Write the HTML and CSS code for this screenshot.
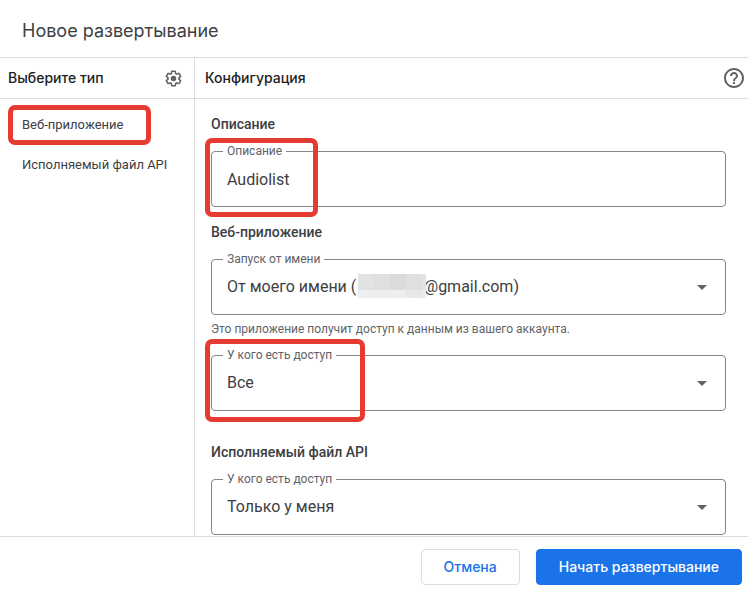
FILE: index.html
```html
<!DOCTYPE html>
<html lang="ru">
<head>
<meta charset="utf-8">
<meta name="viewport" content="width=device-width, initial-scale=1">
<title>Новое развертывание</title>
<link rel="stylesheet" href="styles.css">
</head>
<body>
<main class="dialog">
  <header class="dialog-header"><h1>Новое развертывание</h1></header>
  <div class="columns">
    <nav class="sidebar" aria-labelledby="type-title">
      <div class="bar">
        <h2 id="type-title">Выберите тип</h2>
        <button class="icon-button" type="button" aria-label="Настройки">
          <svg class="gear" viewBox="0 0 24 24"><path d="M13.85 22.25h-3.7c-.74 0-1.36-.54-1.45-1.27l-.27-1.89c-.27-.14-.53-.29-.79-.46l-1.8.72c-.7.26-1.47-.03-1.81-.65L2.2 15.53c-.35-.66-.2-1.44.36-1.88l1.53-1.19c-.01-.15-.02-.3-.02-.46 0-.15.01-.31.02-.46l-1.52-1.19c-.59-.45-.74-1.26-.37-1.88l1.85-3.19c.34-.62 1.11-.9 1.79-.63l1.81.73c.26-.17.52-.32.78-.46l.27-1.91c.09-.7.71-1.25 1.44-1.25h3.7c.74 0 1.36.54 1.45 1.27l.27 1.89c.27.14.53.29.79.46l1.8-.72c.71-.26 1.48.03 1.82.65l1.84 3.18c.36.66.2 1.44-.36 1.88l-1.52 1.19c.01.15.02.3.02.46s-.01.31-.02.46l1.52 1.19c.56.45.72 1.23.37 1.86l-1.86 3.22c-.34.62-1.11.9-1.8.63l-1.8-.72c-.26.17-.52.32-.78.46l-.27 1.91c-.1.68-.72 1.22-1.46 1.22zm-3.23-2h2.76l.37-2.55.53-.22c.44-.18.88-.44 1.34-.78l.45-.34 2.38.96 1.38-2.4-2.03-1.58.07-.56c.03-.26.06-.51.06-.78s-.03-.53-.06-.78l-.07-.56 2.03-1.58-1.39-2.4-2.39.96-.45-.35c-.42-.32-.87-.58-1.33-.77l-.52-.22-.37-2.55h-2.76l-.37 2.55-.53.21c-.44.19-.88.44-1.34.79l-.45.33-2.38-.95-1.39 2.39 2.03 1.58-.07.56a7 7 0 0 0-.06.79c0 .26.02.53.06.78l.07.56-2.03 1.58 1.38 2.4 2.39-.96.45.35c.43.33.86.58 1.33.77l.53.22.38 2.55z"/><circle cx="12" cy="12" r="3.5"/></svg>
        </button>
      </div>
      <ul class="types">
        <li><a class="type" href="#web">Веб-приложение<span class="mark mark-type"></span></a></li>
        <li><a class="type" href="#api">Исполняемый файл API</a></li>
      </ul>
    </nav>
    <section class="config">
      <div class="bar">
        <h2>Конфигурация</h2>
        <button class="icon-button" type="button" aria-label="Справка">
          <svg class="help" viewBox="0 0 24 24"><path d="M11 18h2v-2h-2v2zm1-16C6.48 2 2 6.48 2 12s4.480 10 10 10 10-4.480 10-10S17.520 2 12 2zm0 18c-4.410 0-8-3.590-8-8s3.590-8 8-8 8 3.590 8 8-3.590 8-8 8zm0-14c-2.210 0-4 1.790-4 4h2c0-1.100.9-2 2-2s2 .9 2 2c0 2-3 1.750-3 5h2c0-2.250 3-2.500 3-5 0-2.210-1.790-4-4-4z"/></svg>
        </button>
      </div>
      <form class="form" id="deploy">
        <h3>Описание</h3>
        <div class="field">
          <label for="description">Описание</label>
          <input id="description" type="text" value="Audiolist">
          <span class="mark mark-description"></span>
        </div>
        <h3 id="web">Веб-приложение</h3>
        <div class="field">
          <label for="run-as">Запуск от имени</label>
          <select id="run-as"><option>От моего имени (&nbsp;&nbsp;&nbsp;&nbsp;&nbsp;&nbsp;&nbsp;&nbsp;&nbsp;&nbsp;&nbsp;&nbsp;&nbsp;&nbsp;&nbsp;&nbsp;&nbsp;@gmail.com)</option></select>
          <svg class="redacted" viewBox="0 0 68 24"><path fill="#dfdfdf" d="M0 0h68v16H0z"/><path fill="#dadbda" d="M32 0h16v16H32z"/><path fill="#e2e2e2" d="M0 0h16v16H0zM64 0h4v16h-4z"/><path fill="#eeeeee" d="M0 16h68v8H0z"/><path fill="#e6e8e7" d="M48 16h16v8H48z"/></svg>
          <svg class="arrow" viewBox="0 0 10 5"><path d="M0 0h10L5 5z"/></svg>
        </div>
        <p class="hint">Это приложение получит доступ к данным из вашего аккаунта.</p>
        <div class="field">
          <label for="web-access">У кого есть доступ</label>
          <select id="web-access"><option>Все</option></select>
          <svg class="arrow" viewBox="0 0 10 5"><path d="M0 0h10L5 5z"/></svg>
          <span class="mark mark-access"></span>
        </div>
        <h3 id="api" class="spaced">Исполняемый файл API</h3>
        <div class="field">
          <label for="api-access">У кого есть доступ</label>
          <select id="api-access"><option>Только у меня</option></select>
          <svg class="arrow" viewBox="0 0 10 5"><path d="M0 0h10L5 5z"/></svg>
        </div>
      </form>
    </section>
  </div>
  <footer class="actions">
    <button class="button" type="button">Отмена</button>
    <button class="button primary" type="submit" form="deploy">Начать развертывание</button>
  </footer>
</main>
</body>
</html>
```
FILE: styles.css
```css
* { box-sizing: border-box; }
body {
  margin: 0;
  background: #fff;
  color: #3c4043;
  font-family: Roboto, "Liberation Sans", sans-serif;
}
h1, h2, h3, p, ul { margin: 0; padding: 0; }
button, input, select { font: inherit; color: inherit; }

.dialog {
  display: flex;
  flex-direction: column;
  min-height: 100vh;
}
.dialog-header {
  padding: 19px 22px 14px;
  border-bottom: 1px solid #dadce0;
}
.dialog-header h1 {
  font: 400 18px/24px Inter, sans-serif;
}
.columns {
  display: grid;
  grid-template-columns: 195px 1fr;
  flex: 1;
}
.sidebar { border-right: 1px solid #dadce0; }
.bar {
  display: flex;
  align-items: center;
  justify-content: space-between;
  height: 41px;
  padding: 0 11px 0 8px;
  border-bottom: 1px solid #dadce0;
}
.config .bar { padding: 0 2px 0 10px; }
.bar h2 {
  color: #202124;
  font: 500 14px/20px Inter, sans-serif;
}
.icon-button {
  display: flex;
  padding: 0;
  border: 0;
  background: none;
}
.icon-button svg { fill: #5f6368; }
.gear { width: 19px; height: 19px; }
.help { width: 24px; height: 24px; }

.types {
  list-style: none;
  padding-top: 6px;
}
.type {
  position: relative;
  display: block;
  padding: 0 22px;
  font-size: 13px;
  line-height: 40px;
  color: inherit;
  text-decoration: none;
  white-space: nowrap;
}
.form { padding: 15px 22px 1px 16px; }
.form h3 {
  margin: 15px 0 17px;
  font-size: 14px;
  font-weight: 500;
  line-height: 20px;
}
.form h3:first-child { margin-top: 0; }
.form .spaced { margin-top: 31px; }
.field { position: relative; height: 56px; }
.field input, .field select {
  display: block;
  width: 100%;
  height: 100%;
  padding: 0 15px;
  border: 1px solid #80868b;
  border-radius: 4px;
  background: #fff;
  font-size: 16px;
  appearance: none;
}
.field select { padding-bottom: 2px; }
.field label {
  position: absolute;
  top: -8px;
  left: 12px;
  padding: 0 4px;
  background: #fff;
  color: #5f6368;
  font-size: 12px;
  line-height: 16px;
}
.arrow {
  position: absolute;
  top: 26px;
  right: 19px;
  width: 10px;
  height: 5px;
  fill: #5f6368;
  pointer-events: none;
}
.hint {
  margin: 4px 0 16px;
  color: #5f6368;
  font-size: 12px;
  line-height: 20px;
}
.redacted {
  position: absolute;
  top: 15px;
  left: 147px;
  width: 68px;
  height: 24px;
  pointer-events: none;
}

.mark {
  position: absolute;
  border: 5px solid #e53b32;
  border-radius: 7px;
  pointer-events: none;
}
.mark-type { top: 0; left: 8px; width: 143px; height: 40px; }
.mark-description { top: -13px; left: -6px; width: 113px; height: 79px; }
.mark-access { top: -16px; left: -6px; width: 160px; height: 83px; }

.actions {
  display: flex;
  justify-content: flex-end;
  gap: 16px;
  padding: 12px 6px 9px;
  border-top: 1px solid #dadce0;
}
.button {
  height: 36px;
  padding: 0 22px;
  border: 1px solid #dadce0;
  border-radius: 4px;
  background: #fff;
  color: #1a73e8;
  font: 500 14px/20px Inter, sans-serif;
}
.primary {
  border-color: #1a73e8;
  background: #1a73e8;
  color: #fff;
}
```
